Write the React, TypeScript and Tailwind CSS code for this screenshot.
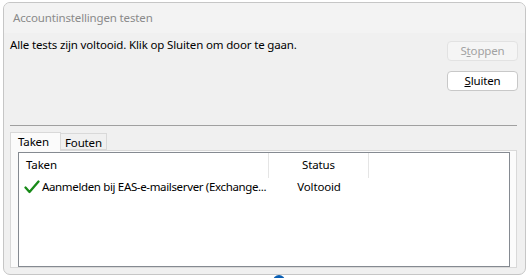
import React from 'react';

const CheckMark = () => (
  <svg width="16" height="14" viewBox="0 0 16 14" className="shrink-0">
    <path d="M1.5 7.5 L5.5 12 L14.5 1.5" fill="none" stroke="#188a18" strokeWidth="2.3" strokeLinecap="round" strokeLinejoin="round" />
  </svg>
);

export default function App() {
  return (
    <div
      className="relative w-[527px] h-[278px] bg-white overflow-hidden text-[11.5px] tracking-[-0.15px] text-black"
      style={{ fontFamily: '"Noto Sans", "Open Sans", sans-serif' }}
    >
      {/* Dialog window */}
      <div className="ml-[3px] mt-[2px] w-[523px] h-[273px] border border-[#c6c6c6] rounded-[7px] bg-[#f0f0f0] flex flex-col overflow-hidden">
        <div className="h-[30px] shrink-0 bg-[#f3f3f3] pl-[9px] flex items-center text-[#8a8a8a]">
          Accountinstellingen testen
        </div>

        <div className="flex flex-1 flex-col">
          <div className="flex h-[92px]">
            <div className="flex-1 pl-[6px] pt-[4px] leading-[16px]">
              Alle tests zijn voltooid. Klik op Sluiten om door te gaan.
            </div>
            <div className="w-[71px] mr-[7px] pt-[8px] flex flex-col gap-[10px]">
              <div className="h-[20px] rounded-[4px] border border-[#e2e2e2] bg-[#f5f5f5] text-[#a2a2a2] flex items-center justify-center">
                <span>S<span className="underline">t</span>oppen</span>
              </div>
              <div className="h-[20px] rounded-[4px] border border-[#c8c8c8] bg-white flex items-center justify-center">
                <span><span className="underline">S</span>luiten</span>
              </div>
            </div>
          </div>

          {/* separator */}
          <div className="ml-[6px] mr-[8px] h-px bg-[#a0a0a0]" />

          {/* Tabs */}
          <div className="ml-[6px] mr-[8px] mt-[5px] flex items-end h-[19px]">
            <div className="w-[51px] h-[19px] border border-b-0 border-[#d9d9d9] bg-[#fbfbfb] pl-[7px] leading-[18px] relative z-10 -mb-px pb-px">
              Taken
            </div>
            <div className="w-[46px] h-[17px] border border-l-0 border-[#d9d9d9] bg-[#f0f0f0] pl-[4px] leading-[17px]">
              Fouten
            </div>
          </div>

          <div className="ml-[6px] mr-[8px] h-[118px] border border-[#d9d9d9] bg-[#fbfbfb] pl-[7px] pr-[6px] pt-[1px]">
            <div className="h-[115px] border border-[#858a91] bg-white">
              <div className="flex h-[25px] items-center">
                <div className="w-[250px] h-full pl-[7px] pb-[1px] flex items-center border-r border-[#e5e5e5]">Taken</div>
                <div className="w-[100px] h-full pb-[1px] flex items-center justify-center border-r border-[#e5e5e5]">Status</div>
              </div>
              <div className="flex h-[18px] items-center">
                <div className="w-[250px] pl-[5px] flex items-center gap-[2px]">
                  <CheckMark />
                  <span className="whitespace-nowrap tracking-[-0.35px]">Aanmelden bij EAS-e-mailserver (Exchange...</span>
                </div>
                <div className="w-[100px] text-center">Voltooid</div>
              </div>
            </div>
          </div>
        </div>
      </div>

      {/* taskbar icon peeking below */}
      <div className="absolute left-[273px] top-[275px] w-[12px] h-[6px] rounded-t-full bg-[#0a5fb4]" />
    </div>
  );
}
